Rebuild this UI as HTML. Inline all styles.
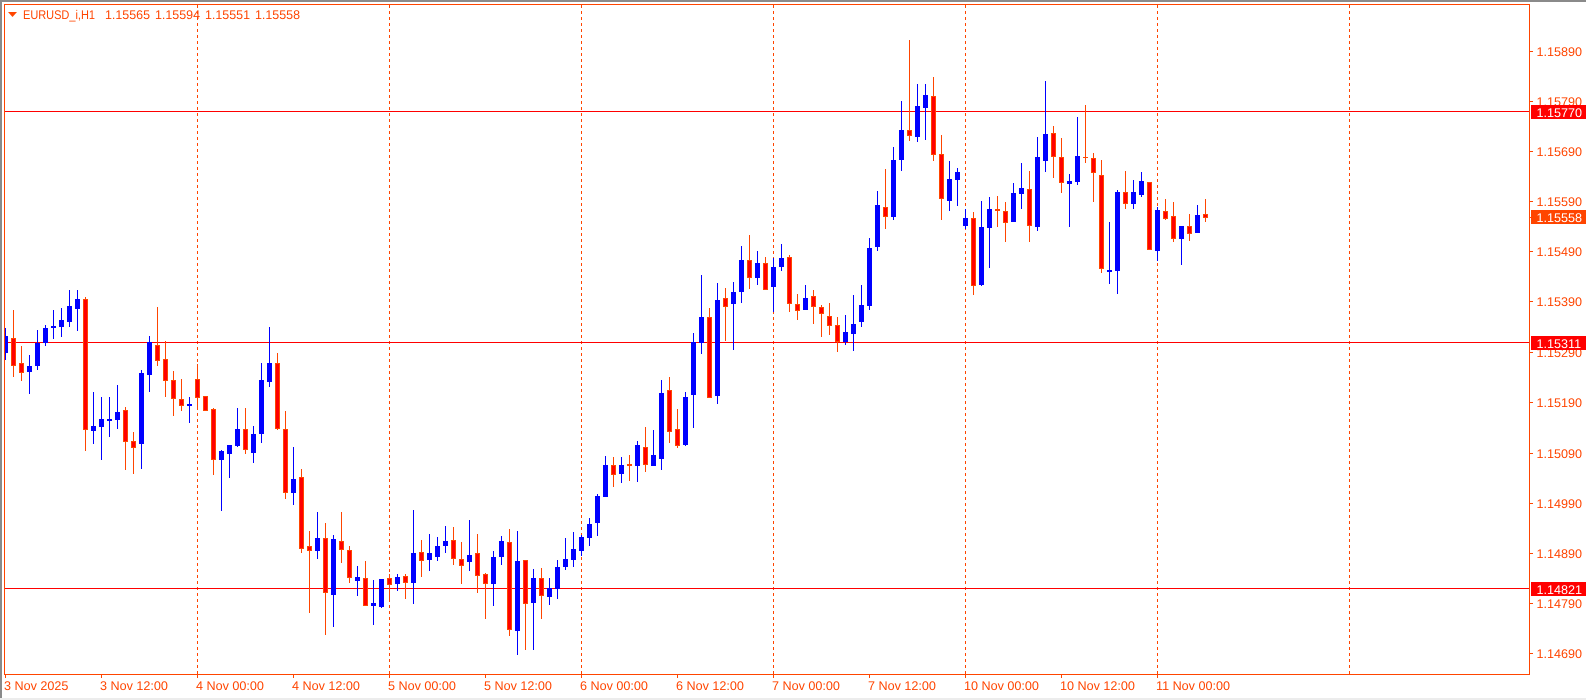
<!DOCTYPE html>
<html><head><meta charset="utf-8"><title>EURUSD_i,H1</title>
<style>
html,body{margin:0;padding:0;background:#fff;width:1586px;height:700px;overflow:hidden}
svg{display:block}
text{font-family:"Liberation Sans",sans-serif;font-size:12.6px;fill:#ff4500}
</style></head><body>
<svg width="1586" height="700" viewBox="0 0 1586 700" xmlns="http://www.w3.org/2000/svg" shape-rendering="crispEdges">
<rect width="1586" height="700" fill="#fff"/>
<rect x="0" y="0" width="1586" height="2" fill="#8a8a8a"/>
<rect x="0" y="0" width="2" height="698" fill="#8a8a8a"/>
<rect x="0" y="698" width="1586" height="2" fill="#ececec"/>

<!-- grid -->
<path d="M197.5 5V674M389.5 5V674M581.5 5V674M773.5 5V674M965.5 5V674M1157.5 5V674M1349.5 5V674" stroke="#ff4500" stroke-width="1" stroke-dasharray="3 3" fill="none"/>
<path d="M5 111.5H1529M5 342.5H1529M5 588.5H1529" stroke="#ff0000" stroke-width="1" fill="none"/>

<!-- red wicks -->
<path fill="none" stroke="#ff4500" stroke-width="1" d="M13.5 310V377M21.5 346V381M85.5 297V451M125.5 407V470M133.5 432V474M157.5 307V366M165.5 341V397M173.5 371V416M181.5 379V411M197.5 364V409M213.5 408V475M245.5 408V454M277.5 353V430M285.5 411V499M301.5 469V553M309.5 531V613M325.5 523V635M341.5 512V563M349.5 546V583M365.5 561V606M389.5 574V601M405.5 574V599M421.5 540V577M453.5 527V565M461.5 542V584M477.5 534V593M485.5 573V619M509.5 529V636M525.5 560V650M541.5 568V619M613.5 457V487M629.5 455V481M645.5 427V472M669.5 377V443M677.5 409V448M709.5 308V398M725.5 288V341M749.5 235V289M765.5 257V290M789.5 255V312M797.5 294V320M813.5 290V324M821.5 305V337M829.5 303V335M837.5 317V352M885.5 169V229M909.5 40V141M933.5 77V161M941.5 135V220M973.5 212V295M997.5 196V227M1005.5 202V242M1029.5 171V242M1053.5 126V178M1061.5 138V193M1085.5 105V163M1093.5 153V202M1101.5 160V273M1125.5 171V209M1165.5 199V220M1173.5 202V242M1189.5 214V241M1205.5 199V222"/>
<!-- blue wicks -->
<path fill="none" stroke="#0000ff" stroke-width="1" d="M5.5 328V360M29.5 355V394M37.5 330V370M45.5 325V346M53.5 310V339M61.5 308V337M69.5 290V327M77.5 290V331M93.5 392V444M101.5 397V460M109.5 397V437M117.5 385V429M141.5 370V469M149.5 336V392M189.5 397V423M221.5 450V511M229.5 445V478M237.5 408V447M253.5 426V463M261.5 363V443M269.5 327V387M293.5 447V505M317.5 512V559M333.5 535V627M357.5 566V596M373.5 580V625M381.5 579V608M397.5 574V591M413.5 510V604M429.5 534V571M437.5 537V561M445.5 526V553M469.5 520V571M493.5 551V606M501.5 536V565M517.5 531V655M533.5 569V650M549.5 578V605M557.5 560V599M565.5 538V570M573.5 532V567M581.5 535V556M589.5 518V546M597.5 494V536M605.5 456V497M621.5 457V483M637.5 441V482M653.5 430V466M661.5 380V470M685.5 392V446M693.5 333V428M701.5 275V354M717.5 283V404M733.5 282V350M741.5 246V303M757.5 251V285M773.5 258V312M781.5 244V271M805.5 285V310M845.5 315V345M853.5 295V351M861.5 285V327M869.5 238V310M877.5 191V251M893.5 147V220M901.5 101V171M917.5 84V142M925.5 84V140M949.5 161V211M957.5 168V206M965.5 209V229M981.5 201V286M989.5 197V268M1013.5 183V222M1021.5 163V209M1037.5 137V231M1045.5 81V172M1069.5 174V227M1077.5 117V185M1109.5 222V284M1117.5 190V294M1133.5 180V209M1141.5 172V197M1157.5 207V261M1181.5 226V265M1197.5 205V233"/>
<!-- blue bodies -->
<path fill="#0000ff" d="M5 336h3v17h-3z"/>
<path fill="none" stroke="#0000ff" stroke-width="5" d="M29.5 366V372M37.5 343V366M45.5 328V343M53.5 326V328M61.5 320V327M69.5 306V322M77.5 299V309M93.5 426V431M101.5 419V427M109.5 419V421M117.5 412V420M141.5 373V444M149.5 342V375M189.5 404V406M221.5 451V460M229.5 445V454M237.5 429V446M253.5 434V453M261.5 380V434M269.5 363V382M293.5 479V493M317.5 538V551M333.5 539V595M357.5 577V581M373.5 603V606M381.5 579V607M397.5 577V584M413.5 553V583M429.5 553V560M437.5 546V557M445.5 541V546M469.5 555V562M493.5 557V584M501.5 541V557M517.5 561V631M533.5 578V603M549.5 588V597M557.5 567V589M565.5 559V567M573.5 549V560M581.5 537V551M589.5 524V538M597.5 496V523M605.5 465V497M621.5 465V474M637.5 445V466M653.5 455V466M661.5 393V459M685.5 397V445M693.5 342V395M701.5 317V343M717.5 300V396M733.5 292V304M741.5 260V292M757.5 263V278M773.5 267V287M781.5 258V267M805.5 298V310M845.5 332V342M853.5 324V334M861.5 305V322M869.5 248V306M877.5 205V247M893.5 160V217M901.5 130V160M917.5 106V137M925.5 95V108M949.5 179V201M957.5 172V180M965.5 218V226M981.5 227V285M989.5 209V228M1013.5 193V222M1021.5 188V194M1037.5 157V227M1045.5 134V161M1069.5 181V184M1077.5 156V182M1109.5 270V272M1117.5 192V271M1133.5 192V204M1141.5 181V195M1157.5 210V251M1181.5 226V239M1197.5 215V233"/>
<!-- red bodies -->
<path fill="#ff0000" stroke="#ff4500" stroke-width="1" d="M11.5 338.5h4V365.5h-4zM19.5 363.5h4V372.5h-4zM83.5 299.5h4V429.5h-4zM123.5 410.5h4V441.5h-4zM131.5 441.5h4V447.5h-4zM155.5 345.5h4V360.5h-4zM163.5 359.5h4V380.5h-4zM171.5 380.5h4V398.5h-4zM179.5 399.5h4V405.5h-4zM195.5 379.5h4V397.5h-4zM203.5 396.5h4V410.5h-4zM211.5 409.5h4V459.5h-4zM243.5 429.5h4V449.5h-4zM275.5 363.5h4V428.5h-4zM283.5 429.5h4V492.5h-4zM299.5 477.5h4V548.5h-4zM307.5 546.5h4V550.5h-4zM323.5 538.5h4V592.5h-4zM339.5 541.5h4V549.5h-4zM347.5 550.5h4V577.5h-4zM363.5 578.5h4V605.5h-4zM387.5 578.5h4V584.5h-4zM403.5 576.5h4V582.5h-4zM419.5 552.5h4V560.5h-4zM451.5 540.5h4V558.5h-4zM459.5 559.5h4V565.5h-4zM475.5 553.5h4V575.5h-4zM483.5 574.5h4V583.5h-4zM507.5 542.5h4V629.5h-4zM523.5 560.5h4V603.5h-4zM539.5 578.5h4V595.5h-4zM611.5 465.5h4V474.5h-4zM627.5 464.5h4V465.5h-4zM643.5 447.5h4V464.5h-4zM667.5 390.5h4V431.5h-4zM675.5 429.5h4V445.5h-4zM707.5 317.5h4V397.5h-4zM723.5 298.5h4V306.5h-4zM747.5 260.5h4V277.5h-4zM763.5 263.5h4V289.5h-4zM787.5 257.5h4V303.5h-4zM795.5 304.5h4V310.5h-4zM811.5 296.5h4V306.5h-4zM819.5 307.5h4V313.5h-4zM827.5 316.5h4V325.5h-4zM835.5 325.5h4V341.5h-4zM883.5 207.5h4V216.5h-4zM907.5 130.5h4V135.5h-4zM931.5 96.5h4V154.5h-4zM939.5 154.5h4V198.5h-4zM971.5 218.5h4V285.5h-4zM995.5 209.5h4V210.5h-4zM1003.5 211.5h4V222.5h-4zM1027.5 189.5h4V225.5h-4zM1051.5 133.5h4V156.5h-4zM1059.5 157.5h4V182.5h-4zM1091.5 158.5h4V172.5h-4zM1099.5 175.5h4V268.5h-4zM1123.5 192.5h4V203.5h-4zM1147.5 182.5h4V249.5h-4zM1163.5 211.5h4V218.5h-4zM1171.5 216.5h4V238.5h-4zM1187.5 226.5h4V233.5h-4zM1203.5 214.5h4V217.5h-4z"/>
<rect x="1083" y="157" width="5" height="1" fill="#ff4500"/>

<!-- frame -->
<path d="M4.5 4.5H1529.5V674.5H4.5Z" fill="none" stroke="#ff4500" stroke-width="1"/>
<!-- price ticks -->
<path d="M1530 51.5h3M1530 101.5h3M1530 151.5h3M1530 201.5h3M1530 251.5h3M1530 301.5h3M1530 352.5h3M1530 402.5h3M1530 453.5h3M1530 503.5h3M1530 553.5h3M1530 603.5h3M1530 653.5h3M1530 217.5h2" stroke="#ff4500" stroke-width="1"/>
<!-- time ticks -->
<path d="M5.5 675v3M101.5 675v3M197.5 675v3M293.5 675v3M389.5 675v3M485.5 675v3M581.5 675v3M677.5 675v3M773.5 675v3M869.5 675v3M965.5 675v3M1061.5 675v3M1157.5 675v3" stroke="#ff4500" stroke-width="1"/>

<!-- header -->
<path d="M8 12h9l-4.5 5z" fill="#ff4500" shape-rendering="auto"/>
<g text-rendering="geometricPrecision">
<text x="23" y="19" textLength="72" lengthAdjust="spacingAndGlyphs">EURUSD_i,H1</text>
<text x="105" y="19" textLength="45" lengthAdjust="spacingAndGlyphs">1.15565</text>
<text x="155" y="19" textLength="45" lengthAdjust="spacingAndGlyphs">1.15594</text>
<text x="205" y="19" textLength="45" lengthAdjust="spacingAndGlyphs">1.15551</text>
<text x="255" y="19" textLength="45" lengthAdjust="spacingAndGlyphs">1.15558</text>

<!-- price scale -->
<text x="1536.5" y="56">1.15890</text>
<text x="1536.5" y="106">1.15790</text>
<text x="1536.5" y="156">1.15690</text>
<text x="1536.5" y="206">1.15590</text>
<text x="1536.5" y="256">1.15490</text>
<text x="1536.5" y="306">1.15390</text>
<text x="1536.5" y="357">1.15290</text>
<text x="1536.5" y="407">1.15190</text>
<text x="1536.5" y="458">1.15090</text>
<text x="1536.5" y="508">1.14990</text>
<text x="1536.5" y="558">1.14890</text>
<text x="1536.5" y="608">1.14790</text>
<text x="1536.5" y="658">1.14690</text>

<rect x="1531" y="105" width="55" height="14" fill="#ff0000"/>
<text x="1536.5" y="117" style="fill:#fff">1.15770</text>
<rect x="1531" y="210" width="55" height="14" fill="#ff4500"/>
<text x="1536.5" y="222" style="fill:#fff">1.15558</text>
<rect x="1531" y="336" width="55" height="14" fill="#ff0000"/>
<text x="1536.5" y="348" style="fill:#fff">1.15311</text>
<rect x="1531" y="582" width="55" height="14" fill="#ff0000"/>
<text x="1536.5" y="594" style="fill:#fff">1.14821</text>

<!-- time scale -->
<text x="4" y="690">3 Nov 2025</text>
<text x="100" y="690">3 Nov 12:00</text>
<text x="196" y="690">4 Nov 00:00</text>
<text x="292" y="690">4 Nov 12:00</text>
<text x="388" y="690">5 Nov 00:00</text>
<text x="484" y="690">5 Nov 12:00</text>
<text x="580" y="690">6 Nov 00:00</text>
<text x="676" y="690">6 Nov 12:00</text>
<text x="772" y="690">7 Nov 00:00</text>
<text x="868" y="690">7 Nov 12:00</text>
<text x="964" y="690">10 Nov 00:00</text>
<text x="1060" y="690">10 Nov 12:00</text>
<text x="1156" y="690">11 Nov 00:00</text>
</g>
</svg>
</body></html>
